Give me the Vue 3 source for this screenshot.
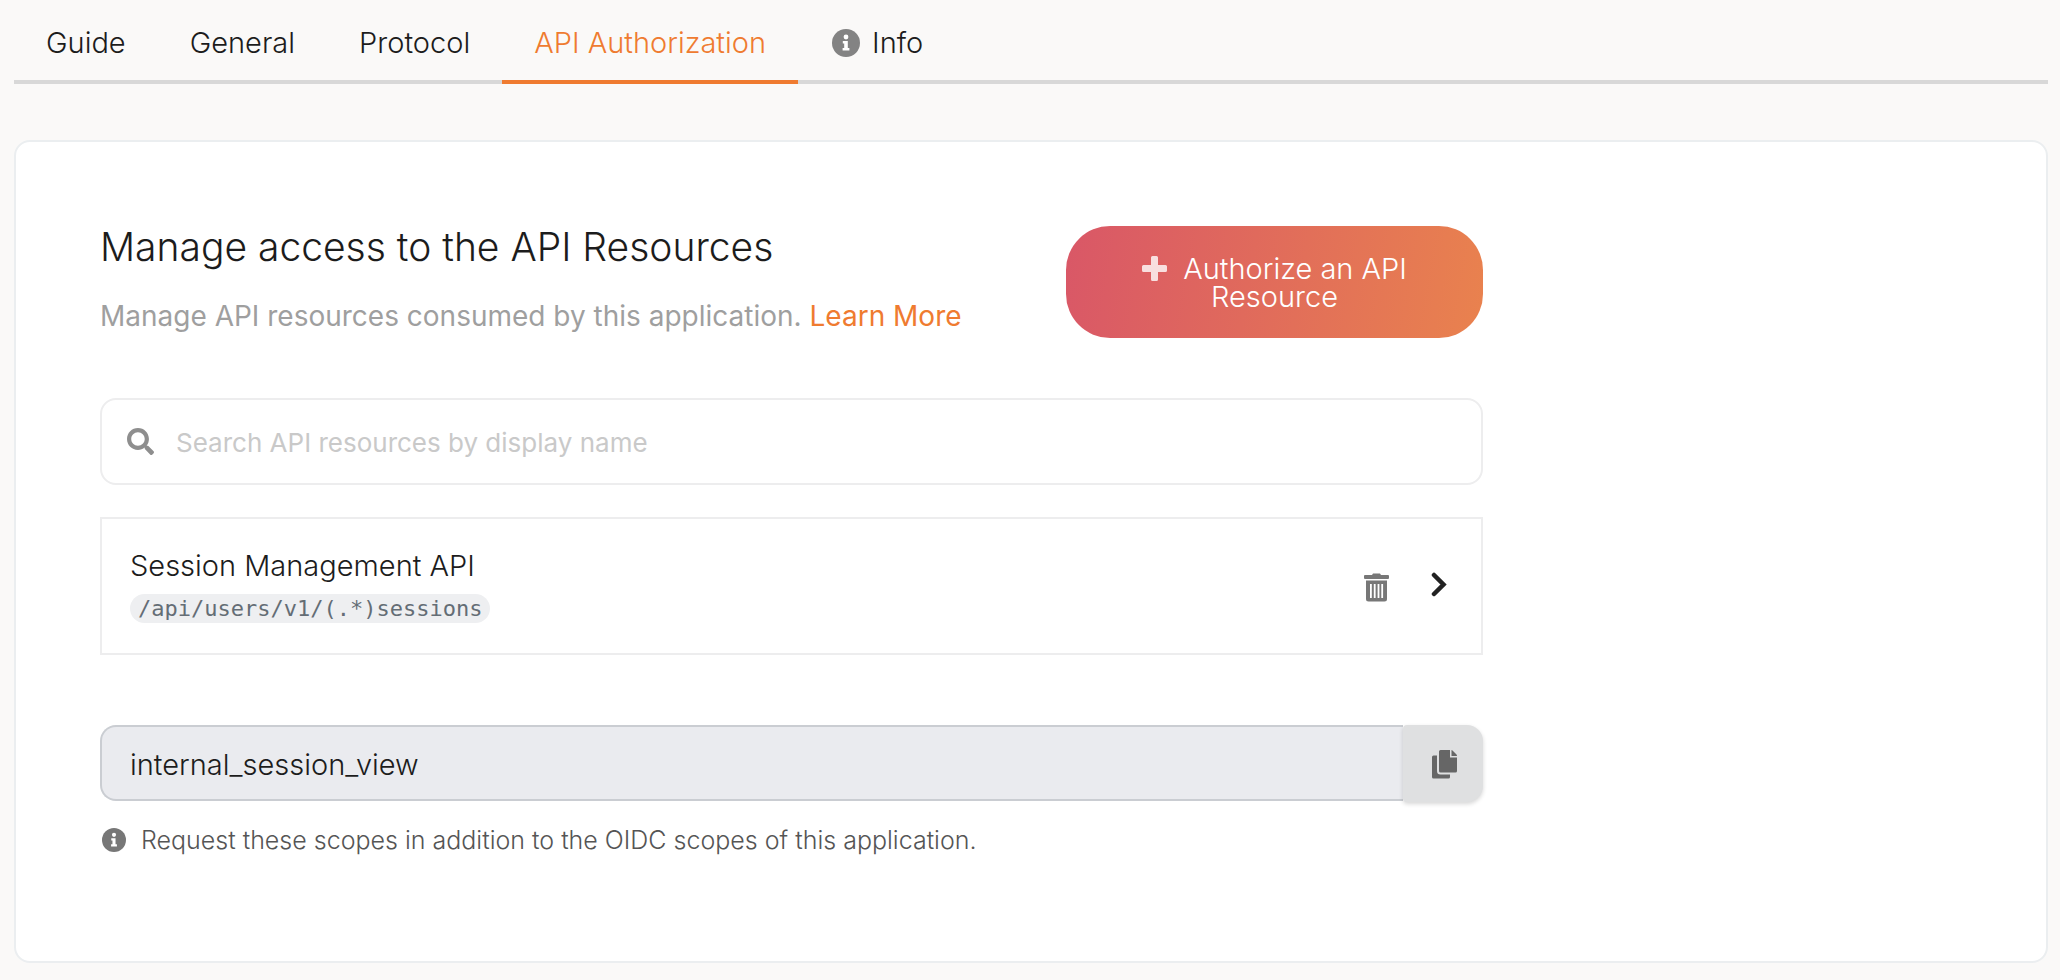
<script setup>
import { ref } from 'vue'

const tabs = [
  { id: 'guide', label: 'Guide' },
  { id: 'general', label: 'General' },
  { id: 'protocol', label: 'Protocol' },
  { id: 'api', label: 'API Authorization' },
  { id: 'info', label: 'Info', icon: true },
]
const active = ref('api')
const query = ref('')
const scope = ref('internal_session_view')
</script>

<template>
  <main class="page">
    <nav class="tabs" aria-label="Application sections">
      <button
        v-for="tab in tabs"
        :key="tab.id"
        type="button"
        class="tab"
        :class="{ active: tab.id === active }"
        @click="active = tab.id"
      >
        <svg v-if="tab.icon" class="tab-icon" viewBox="0 0 28 28" aria-hidden="true">
          <circle cx="14" cy="14" r="14" fill="#838383" />
          <circle cx="14" cy="8" r="2.4" fill="#fff" />
          <path d="M10.8 12h5v7h1.600v2.600h-6.800V19h1.600v-4.400h-1.400z" fill="#fff" />
        </svg>
        <span>{{ tab.label }}</span>
      </button>
    </nav>

    <section class="card">
      <div class="content">
        <header class="head">
          <div class="intro">
            <h1>Manage access to the API Resources</h1>
            <p>Manage API resources consumed by this application. <a href="#">Learn More</a></p>
          </div>
          <button type="button" class="authorize">
            <svg class="plus" viewBox="0 0 25 25" aria-hidden="true">
              <path d="M10.5 0h4q1.5 0 1.5 1.5V9h7.500q1.500 0 1.500 1.500v4q0 1.500-1.500 1.500H16v7.500q0 1.500-1.500 1.500h-4Q9 25 9 23.500V16H1.500Q0 16 0 14.500v-4Q0 9 1.500 9H9V1.500Q9 0 10.500 0z" fill="#fff" fill-opacity=".8" />
            </svg>Authorize an API Resource
          </button>
        </header>

        <label class="search">
          <svg class="search-icon" viewBox="0 0 512 512" aria-hidden="true">
            <path fill="#8e8e8e" d="M505 442.700L405.300 343c-4.500-4.500-10.600-7-17-7H372c27.600-35.300 44-79.700 44-128C416 93.100 322.900 0 208 0S0 93.100 0 208s93.100 208 208 208c48.300 0 92.700-16.400 128-44v16.300c0 6.400 2.500 12.500 7 17l99.700 99.700c9.400 9.400 24.600 9.400 33.900 0l28.300-28.300c9.400-9.400 9.400-24.600.1-34zM208 336c-70.700 0-128-57.200-128-128 0-70.700 57.200-128 128-128 70.700 0 128 57.200 128 128 0 70.700-57.200 128-128 128z" />
          </svg>
          <input v-model="query" type="text" aria-label="Search API resources" placeholder="Search API resources by display name" />
        </label>

        <div class="resource">
          <div class="resource-text">
            <h2>Session Management API</h2>
            <code>/api/users/v1/(.*)sessions</code>
          </div>
          <button type="button" class="icon-button" aria-label="Remove API resource">
            <svg class="trash" viewBox="0 -3 25 32" aria-hidden="true">
              <path fill="#777" fill-rule="evenodd" d="M1 2h7L9 .5h7L17 2h7q1 0 1 1v2q0 1-1 1H1Q0 6 0 5V3q0-1 1-1zM2 7.500h21V26q0 2.500-2.500 2.500h-16Q2 28.500 2 26zM6 11v14h1.800V11zM9.800 11v14h1.800V11zM13.600 11v14h1.800V11zM17.300 11v14h1.800V11z" />
            </svg>
          </button>
          <button type="button" class="icon-button" aria-label="Expand API resource">
            <svg class="chevron" viewBox="0 0 16 28" aria-hidden="true">
              <path d="M3 3l9.500 9.500L3 22" fill="none" stroke="#222" stroke-width="4.500" stroke-linecap="round" />
            </svg>
          </button>
        </div>

        <div class="scope">
          <input v-model="scope" type="text" readonly aria-label="Scopes" />
          <button type="button" class="copy" aria-label="Copy scopes">
            <svg class="copy-icon" viewBox="0 0 25 29" aria-hidden="true">
              <path fill="#666" d="M1.500 5.500H5V21q0 3.500 3.500 3.500H18V27q0 1.500-1.500 1.500h-15Q0 28.500 0 27V7q0-1.500 1.500-1.500z" />
              <path fill="#666" d="M8.500 0H18v7.500h7V21q0 1.500-1.500 1.500h-15Q7 22.500 7 21V1.500Q7 0 8.500 0z" />
              <path fill="#666" d="M19.500 0q.6 0 1 .5l4 4q.5.500.5 1.500h-5.500z" />
            </svg>
          </button>
        </div>

        <p class="hint">
          <svg class="hint-icon" viewBox="0 0 28 28" aria-hidden="true">
            <circle cx="14" cy="14" r="14" fill="#777" />
            <circle cx="14" cy="8" r="2.400" fill="#fff" />
            <path d="M10.800 12h5v7h1.600v2.600h-6.800V19h1.600v-4.400h-1.400z" fill="#fff" />
          </svg>
          <span>Request these scopes in addition to the OIDC scopes of this application.</span>
        </p>
      </div>
    </section>
  </main>
</template>

<style>
html,
body {
  background: #faf9f8;
}
</style>

<style scoped>
.page,
.page * {
  box-sizing: border-box;
}
.page {
  padding: 0 12px 16px 14px;
  font-family: Inter, "Liberation Sans", sans-serif;
  font-size: 29px;
  font-weight: 300;
  line-height: 36px;
  color: #1c1c1c;
}
button,
input {
  margin: 0;
  padding: 0;
  border: 0;
  background: none;
  font: inherit;
  color: inherit;
}
button {
  cursor: pointer;
}
svg {
  display: block;
  flex: none;
}
h1,
h2,
p {
  margin: 0;
  font-weight: inherit;
}
.tabs {
  display: flex;
  border-bottom: 4px solid #d8d8d8;
}
.tab {
  display: flex;
  align-items: center;
  gap: 12px;
  height: 84px;
  margin-bottom: -4px;
  padding: 6px 32px 0;
  border-bottom: 4px solid transparent;
}
.tab.active {
  color: #ef7b30;
  border-bottom-color: #ef7b30;
}
.tab-icon {
  width: 28px;
  height: 28px;
  margin-left: 2px;
}
.card {
  margin-top: 56px;
  padding: 84px 84px 103px;
  background: #fff;
  border: 2px solid #ebeef0;
  border-radius: 16px;
}
.content {
  width: 74.3%;
}
.head {
  display: flex;
  justify-content: space-between;
  align-items: flex-start;
}
h1 {
  font-size: 39px;
  line-height: 42px;
}
.intro p {
  margin-top: 30px;
  font-size: 28px;
  font-weight: 400;
  color: #9f9f9f;
}
a {
  color: #ef7b30;
  text-decoration: none;
}
.authorize {
  width: 30.2%;
  min-height: 112px;
  padding: 29px 64px 27px;
  border-radius: 44px;
  background: linear-gradient(100deg, #d95767, #e9824e);
  color: #fff;
  line-height: 28px;
}
.plus {
  display: inline-block;
  width: 25px;
  height: 25px;
  margin-right: 16px;
  vertical-align: -2px;
}
.search {
  display: flex;
  align-items: center;
  gap: 22px;
  height: 87px;
  margin-top: 60px;
  padding: 0 25px;
  border: 2px solid #ededee;
  border-radius: 16px;
}
.search-icon {
  width: 27px;
  height: 27px;
}
.search input {
  flex: 1;
  min-width: 0;
  padding-top: 2px;
  font-size: 26px;
  font-weight: 400;
  outline: 0;
}
.search input::placeholder {
  color: #c9c9c9;
  opacity: 1;
}
.resource {
  display: flex;
  align-items: center;
  gap: 42px;
  min-height: 138px;
  margin-top: 32px;
  padding: 0 34px 0 28px;
  border: 2px solid #ededee;
}
.resource-text {
  flex: 1;
  padding-bottom: 2px;
}
h2 {
  font-size: 29px;
  line-height: 36px;
}
code {
  display: block;
  width: fit-content;
  margin-top: 10px;
  padding: 0 8px;
  border-radius: 15px;
  background: #eeeff1;
  color: #646d75;
  font: 400 22px/29px "DejaVu Sans Mono", monospace;
}
.trash {
  width: 25px;
  height: 32px;
}
.chevron {
  width: 16px;
  height: 28px;
}
.scope {
  display: flex;
  margin-top: 70px;
}
.scope input {
  flex: 1;
  min-width: 0;
  height: 76px;
  padding: 2px 28px 0;
  border: 2px solid #cacdd2;
  border-right: 0;
  border-radius: 16px 0 0 16px;
  background: #eaebef;
  outline: 0;
}
.copy {
  display: flex;
  align-items: center;
  justify-content: center;
  width: 80px;
  height: 77px;
  padding: 2px 0 0 2px;
  border-radius: 4px 16px 16px 4px;
  background: #dfe0e1;
  box-shadow: 0 2px 4px rgba(0, 0, 0, 0.16);
}
.copy-icon {
  width: 25px;
  height: 29px;
}
.hint {
  display: flex;
  align-items: center;
  gap: 15px;
  margin-top: 20px;
  padding-left: 2px;
  font-size: 25px;
  color: #555;
}
.hint-icon {
  width: 24px;
  height: 24px;
}
</style>
